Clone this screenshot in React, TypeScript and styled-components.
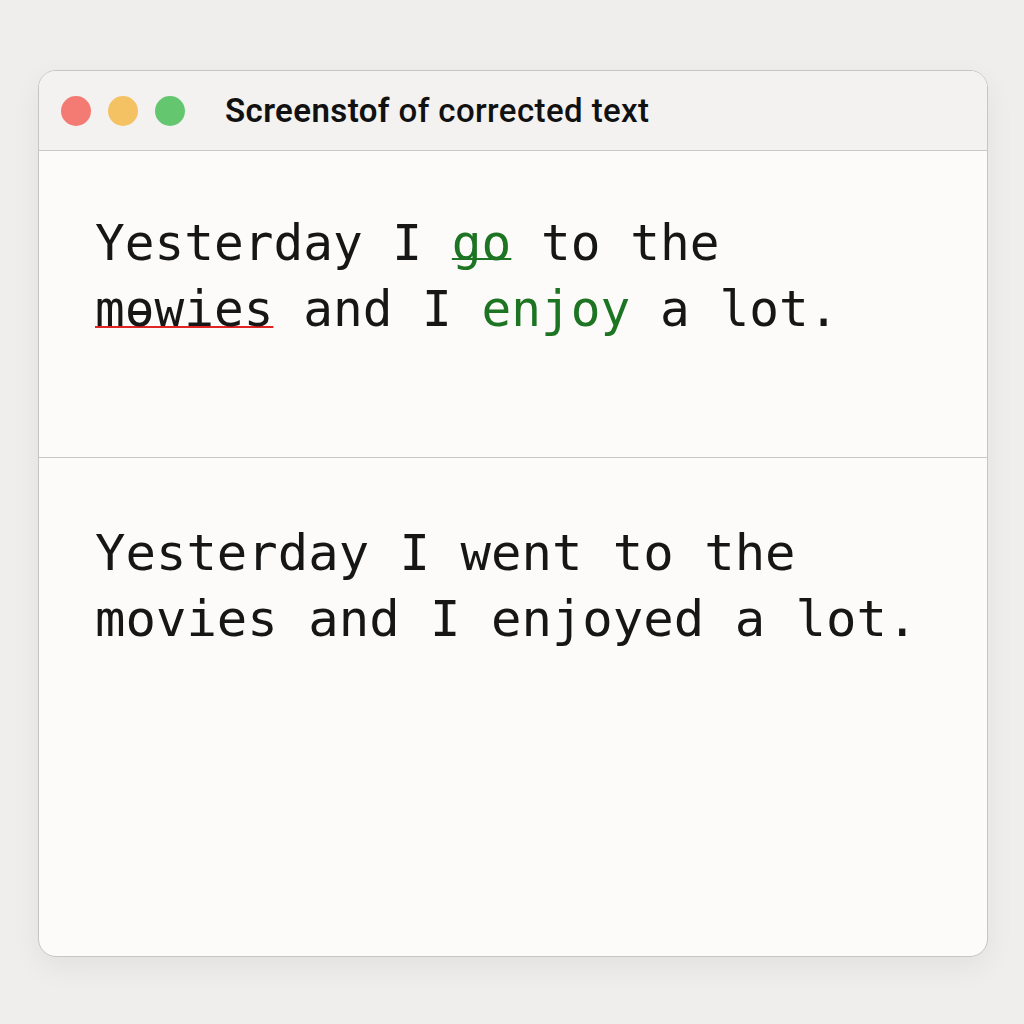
import React from "react";
import styled, { createGlobalStyle } from "styled-components";

const GlobalStyle = createGlobalStyle`
  html, body {
    margin: 0;
    padding: 0;
    background: #efeeec;
  }
`;

const Page = styled.div`
  width: 1024px;
  height: 1024px;
  box-sizing: border-box;
  padding: 70px 0 0 38px;
  background: #efeeec;
`;

const Window = styled.div`
  width: 950px;
  height: 887px;
  box-sizing: border-box;
  border: 1.5px solid #c6c5c3;
  border-radius: 18px;
  background: #fcfbf9;
  overflow: hidden;
  display: flex;
  flex-direction: column;
  box-shadow: 0 10px 30px rgba(0, 0, 0, 0.06);
`;

const TitleBar = styled.div`
  height: 80px;
  flex: none;
  box-sizing: border-box;
  display: flex;
  align-items: center;
  padding-left: 22px;
  gap: 18px;
  background: #f3f2f0;
  border-bottom: 1.5px solid #c9c8c6;
`;

const Lights = styled.div`
  display: flex;
  gap: 17px;
`;

const Light = styled.span<{ $color: string }>`
  width: 30px;
  height: 30px;
  border-radius: 50%;
  background: ${(p) => p.$color};
`;

const Title = styled.div`
  margin-left: 22px;
  font-family: Roboto, "Liberation Sans", sans-serif;
  font-size: 33px;
  font-weight: 500;
  color: #111;
  letter-spacing: 0.4px;

  b {
    font-weight: 600;
  }
`;

const Panel = styled.div<{ $size: number; $top: number; $grow?: boolean }>`
  box-sizing: border-box;
  padding: ${(p) => p.$top}px 0 0 56px;
  height: ${(p) => (p.$grow ? "auto" : "307px")};
  flex: ${(p) => (p.$grow ? "1" : "none")};
  font-family: "DejaVu Sans Mono", "Liberation Mono", monospace;
  font-size: ${(p) => p.$size}px;
  line-height: 66px;
  color: #161616;
  border-bottom: ${(p) => (p.$grow ? "none" : "1.5px solid #c9c8c6")};
`;

const Line = styled.div`
  white-space: pre;
`;

const Fix = styled.span<{ $underline?: boolean }>`
  color: #1d7423;
  text-decoration: ${(p) => (p.$underline ? "underline" : "none")};
  text-decoration-thickness: 1.5px;
  text-decoration-skip-ink: none;
  text-underline-offset: -2px;
`;

const Misspelled = styled.span`
  text-decoration: underline;
  text-decoration-color: #e02424;
  text-decoration-thickness: 1.5px;
  text-decoration-skip-ink: none;
  text-underline-offset: 0px;
`;

export default function App() {
  return (
    <>
      <GlobalStyle />
      <Page>
        <Window>
          <TitleBar>
            <Lights>
              <Light $color="#f47b73" />
              <Light $color="#f5c263" />
              <Light $color="#64c76f" />
            </Lights>
            <Title>
              <b>Screenstof</b> of corrected text
            </Title>
          </TitleBar>
          <Panel $size={49.4} $top={59}>
            <Line>
              Yesterday I <Fix $underline>go</Fix> to the
            </Line>
            <Line>
              <Misspelled>mɵwies</Misspelled> and I <Fix>enjoy</Fix> a lot.
            </Line>
          </Panel>
          <Panel $size={50.6} $top={62} $grow>
            <Line>Yesterday I went to the</Line>
            <Line>movies and I enjoyed a lot.</Line>
          </Panel>
        </Window>
      </Page>
    </>
  );
}
